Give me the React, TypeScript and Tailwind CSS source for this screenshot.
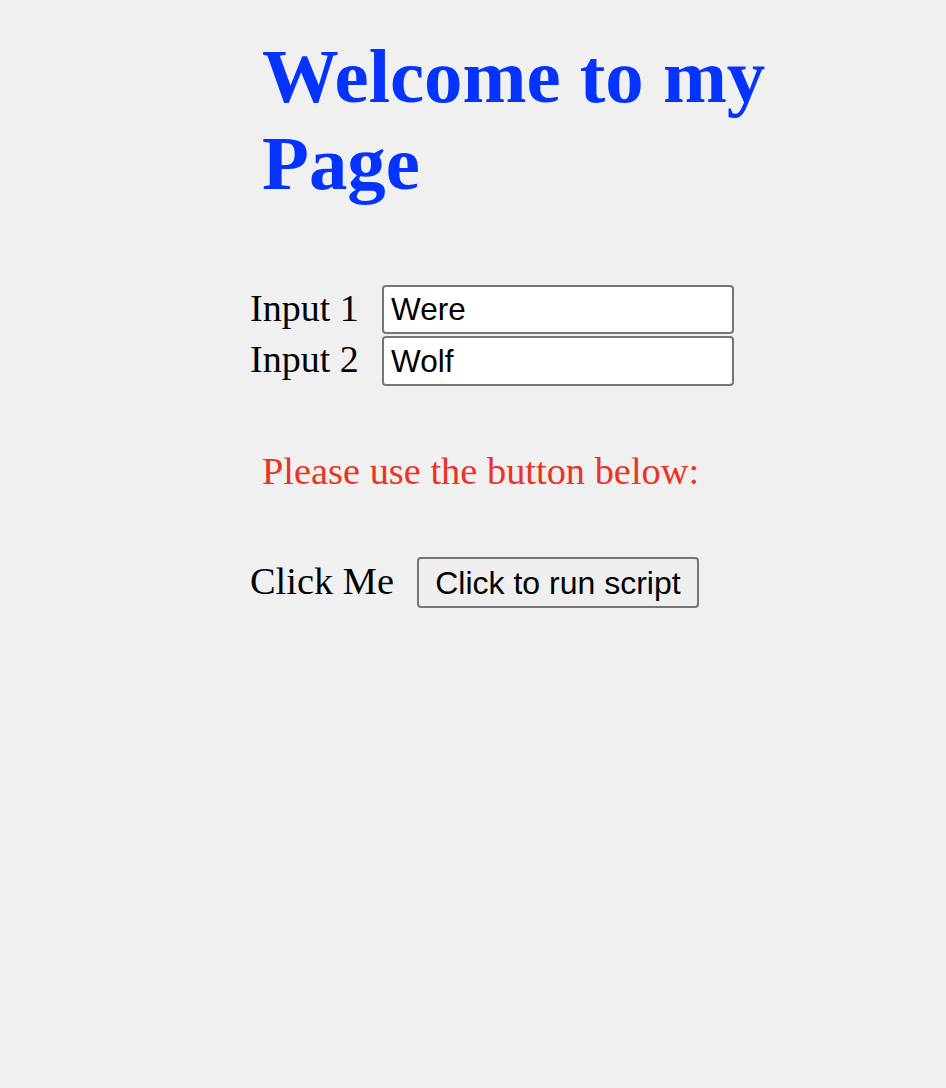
import { useState } from "react";

const serif = { fontFamily: '"Liberation Serif", "Times New Roman", serif' };
const sans = { fontFamily: '"Liberation Sans", Arial, sans-serif' };

const inputClass =
  "w-[352px] rounded-[4px] border-2 border-[#767676] bg-white pl-[7px] text-[31.5px] text-black outline-none";

export default function App() {
  const [first, setFirst] = useState("Were");
  const [second, setSecond] = useState("Wolf");

  function runScript() {
    console.log(first, second);
  }

  return (
    <div className="min-h-screen bg-[#f0f0f0] pl-[250px] pt-[33px] text-black" style={serif}>
      <h1 className="ml-[12px] w-[530px] text-[76.8px] font-bold leading-[87px] text-[#0433ff]">
        Welcome to my Page
      </h1>

      <div className="mt-[78px] grid grid-cols-[132px_352px] gap-y-[2px]">
        <div className="flex items-center">
          <label htmlFor="input-1" className="pb-[4px] text-[38px] leading-[44px]">
            Input 1
          </label>
        </div>
        <input
          id="input-1"
          className={`${inputClass} h-[49px]`}
          style={sans}
          value={first}
          onChange={(event) => setFirst(event.target.value)}
        />
        <div className="flex items-center">
          <label htmlFor="input-2" className="pb-[4px] text-[38px] leading-[44px]">
            Input 2
          </label>
        </div>
        <input
          id="input-2"
          className={`${inputClass} h-[50px]`}
          style={sans}
          value={second}
          onChange={(event) => setSecond(event.target.value)}
        />
      </div>

      <p className="ml-[12px] mt-[63px] text-[38.4px] leading-[44px] text-[#ea3323]">
        Please use the button below:
      </p>

      <div className="mt-[64px] flex items-center gap-[23px]">
        <span className="pb-[4px] text-[38.4px] leading-[44px]">Click Me</span>
        <button
          type="button"
          className="h-[51px] w-[282px] rounded-[4px] border-2 border-[#767676] bg-[#efefef] text-[32px] leading-none text-black"
          style={sans}
          onClick={runScript}
        >
          Click to run script
        </button>
      </div>
    </div>
  );
}
